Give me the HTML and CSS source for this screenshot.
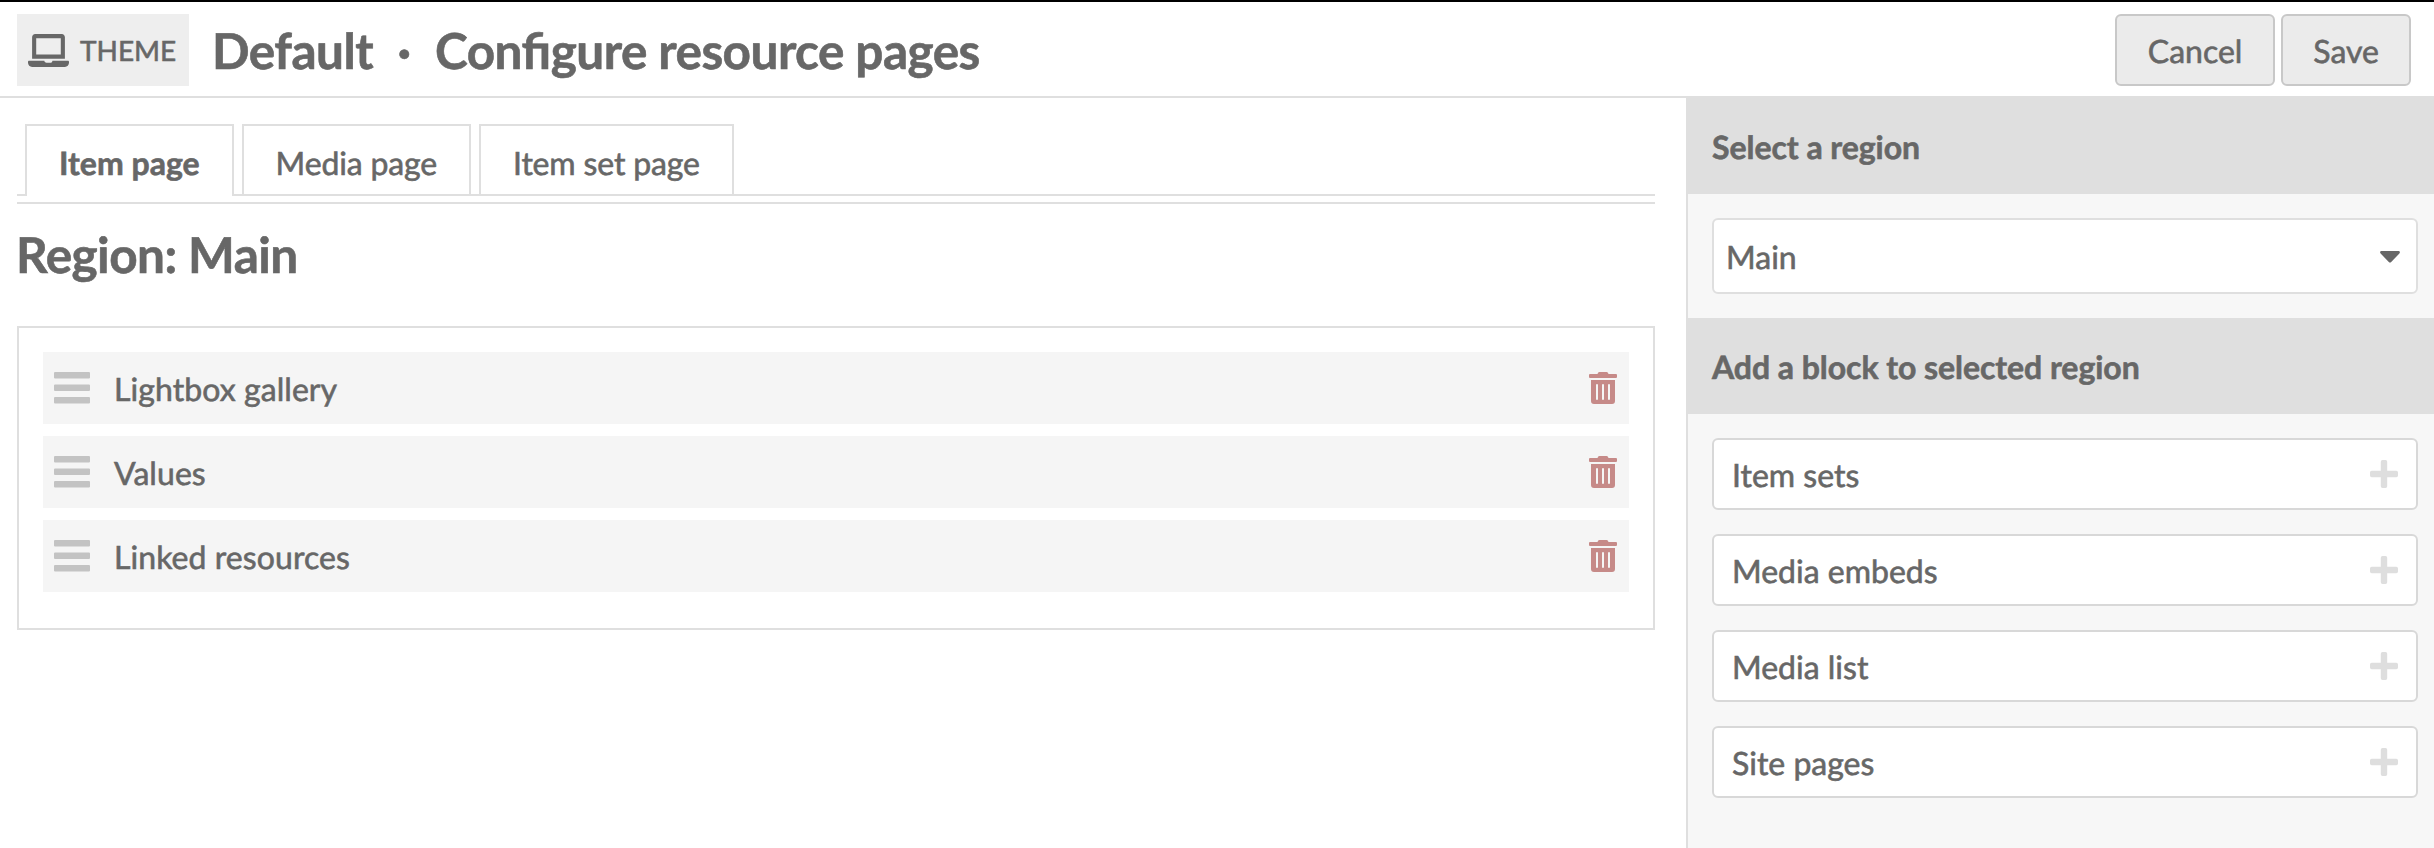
FILE: index.html
```html
<!DOCTYPE html>
<html lang="en">
<head>
<meta charset="utf-8">
<title>Configure resource pages</title>
<link rel="stylesheet" href="styles.css">
</head>
<body>
<svg class="sprite" aria-hidden="true">
  <symbol id="bars" viewBox="0 0 36 32"><path d="M1 0h34a1 1 0 0 1 1 1v4.500a1 1 0 0 1-1 1H1a1 1 0 0 1-1-1V1a1 1 0 0 1 1-1zM1 12.500h34a1 1 0 0 1 1 1V18a1 1 0 0 1-1 1H1a1 1 0 0 1-1-1v-4.500a1 1 0 0 1 1-1zM1 25h34a1 1 0 0 1 1 1v4.500a1 1 0 0 1-1 1H1a1 1 0 0 1-1-1V26a1 1 0 0 1 1-1z"/></symbol>
  <symbol id="trash" viewBox="0 0 448 512"><path d="M32 464a48 48 0 0 0 48 48h288a48 48 0 0 0 48-48V128H32zm272-256a16 16 0 0 1 32 0v224a16 16 0 0 1-32 0zm-96 0a16 16 0 0 1 32 0v224a16 16 0 0 1-32 0zm-96 0a16 16 0 0 1 32 0v224a16 16 0 0 1-32 0zM432 32H312l-9.400-18.700A24 24 0 0 0 281.100 0H166.800a23.720 23.720 0 0 0-21.400 13.300L136 32H16A16 16 0 0 0 0 48v32a16 16 0 0 0 16 16h416a16 16 0 0 0 16-16V48a16 16 0 0 0-16-16z"/></symbol>
  <symbol id="plus" viewBox="0 0 28 28"><path d="M12.500 0h3a1.700 1.700 0 0 1 1.700 1.700v9.100h9.100a1.700 1.700 0 0 1 1.700 1.700v3a1.700 1.700 0 0 1-1.700 1.700h-9.100v9.100a1.700 1.700 0 0 1-1.700 1.700h-3a1.700 1.700 0 0 1-1.700-1.700v-9.100H1.700A1.700 1.700 0 0 1 0 15.500v-3a1.700 1.700 0 0 1 1.700-1.700h9.100V1.700A1.700 1.700 0 0 1 12.500 0z"/></symbol>
</svg>
<header class="topbar">
  <span class="section">
    <svg class="laptop" viewBox="0 0 640 512"><path d="M624 416H381.540c-.740 19.810-14.710 32-32.740 32H288c-18.690 0-33.020-17.470-32.770-32H16c-8.800 0-16 7.200-16 16v16c0 35.200 28.800 64 64 64h512c35.200 0 64-28.800 64-64v-16c0-8.800-7.200-16-16-16zM576 48c0-26.400-21.600-48-48-48H112C85.600 0 64 21.600 64 48v336h512V48zm-64 272H128V64h384v256z"/></svg>
    <span>THEME</span>
  </span>
  <h1 class="title"><span>Default</span><span class="dot">·</span><span>Configure resource pages</span></h1>
  <div class="actions"><button class="button">Cancel</button><button class="button save">Save</button></div>
</header>
<div class="layout">
  <main class="content">
    <nav class="tabs">
      <a class="tab active">Item page</a>
      <a class="tab">Media page</a>
      <a class="tab">Item set page</a>
    </nav>
    <h2 class="region-title">Region: Main</h2>
    <ul class="blocks">
      <li class="block"><svg class="handle"><use href="#bars"/></svg><span class="name">Lightbox gallery</span><svg class="remove"><use href="#trash"/></svg></li>
      <li class="block"><svg class="handle"><use href="#bars"/></svg><span class="name">Values</span><svg class="remove"><use href="#trash"/></svg></li>
      <li class="block"><svg class="handle"><use href="#bars"/></svg><span class="name">Linked resources</span><svg class="remove"><use href="#trash"/></svg></li>
    </ul>
  </main>
  <aside class="sidebar">
    <h3 class="side-heading first">Select a region</h3>
    <div class="select"><span>Main</span><svg class="caret" viewBox="0 0 20 12"><path d="M1.500 0h17c1.400 0 1.900 1.500.900 2.500l-8.200 8.500c-.700.700-1.700.700-2.400 0L.600 2.500C-.400 1.500.100 0 1.500 0z"/></svg></div>
    <h3 class="side-heading">Add a block to selected region</h3>
    <div class="options">
      <button class="option"><span>Item sets</span><svg class="plus"><use href="#plus"/></svg></button>
      <button class="option"><span>Media embeds</span><svg class="plus"><use href="#plus"/></svg></button>
      <button class="option"><span>Media list</span><svg class="plus"><use href="#plus"/></svg></button>
      <button class="option"><span>Site pages</span><svg class="plus"><use href="#plus"/></svg></button>
    </div>
  </aside>
</div>
</body>
</html>
```

FILE: styles.css
```css
* { box-sizing: border-box; }
body {
  margin: 0;
  height: 848px;
  display: flex;
  flex-direction: column;
  overflow: hidden;
  background: #fff;
  color: #676767;
  font: 32px/48px Lato, sans-serif;
  text-rendering: geometricPrecision;
  -webkit-text-stroke: 0.6px currentColor;
}
h1, h2, h3, ul { margin: 0; padding: 0; }
svg { display: block; flex: none; fill: currentColor; }
.sprite { display: none; }
button { font: inherit; color: inherit; margin: 0; text-rendering: inherit; }

.topbar {
  flex: none;
  height: 98px;
  display: flex;
  align-items: flex-start;
  padding: 12px 23px 0 17px;
  border-top: 2px solid #000;
  border-bottom: 2px solid #dfdfdf;
}
.section {
  width: 172px;
  height: 72px;
  display: flex;
  align-items: center;
  gap: 11px;
  padding-left: 11px;
  background: #eee;
  font-size: 28px;
}
.laptop { width: 41px; height: 33px; }
.title, .region-title {
  font-size: 49.5px;
  line-height: 72px;
  letter-spacing: -0.54px;
  font-feature-settings: "liga" 1;
}
.title { display: flex; margin-left: 23px; }
.dot { width: 62px; text-align: center; }
.actions { display: flex; gap: 6px; margin-left: auto; }
.button {
  height: 72px;
  padding: 2px 31px 0;
  border: 2px solid #c8c8c8;
  border-radius: 6px;
  background: #ebebeb;
}
.button.save { padding: 2px 30px 0; }

.layout { flex: 1; display: flex; }
.content { flex: 1; padding: 26px 31px 0 17px; }
.tabs {
  display: flex;
  gap: 8px;
  height: 80px;
  padding-left: 8px;
  border-bottom: 2px solid #dfdfdf;
  background: linear-gradient(#dfdfdf, #dfdfdf) 0 70px / 100% 2px no-repeat;
}
.tab {
  height: 70px;
  padding: 13px 32px 0;
  border: 2px solid #dfdfdf;
  border-bottom: 0;
  letter-spacing: -0.15px;
}
.tab.active { height: 72px; background: #fff; font-weight: 700; letter-spacing: 0; }
.region-title { margin-top: 14px; margin-left: -1px; }
.blocks {
  height: 304px;
  margin-top: 36px;
  padding: 24px;
  display: flex;
  flex-direction: column;
  gap: 12px;
  border: 2px solid #dfdfdf;
  list-style: none;
}
.block {
  height: 72px;
  display: flex;
  align-items: center;
  padding: 0 12px 0 11px;
  background: #f5f5f5;
}
.handle { width: 36px; height: 32px; margin-top: -1px; color: #c3c3c3; }
.name { flex: 1; margin-left: 24px; padding-top: 1px; letter-spacing: 0.07px; }
.remove { width: 28px; height: 32px; color: #c68a88; }

.sidebar {
  width: 748px;
  margin-top: -2px;
  border-left: 2px solid #dfdfdf;
  background: #f7f7f7;
}
.side-heading {
  height: 96px;
  padding: 25px 24px 0;
  background: #dfdfdf;
  font-size: 32px;
  line-height: 48px;
  letter-spacing: -0.05px;
}
.side-heading.first { height: 98px; padding-top: 27px; }
.select {
  height: 76px;
  margin: 24px 16px 24px 24px;
  padding: 2px 16px 0 12px;
  display: flex;
  align-items: center;
  justify-content: space-between;
  border: 2px solid #dfdfdf;
  border-radius: 6px;
  background: #fff;
}
.caret { width: 20px; height: 12px; }
.options {
  display: flex;
  flex-direction: column;
  gap: 24px;
  padding: 24px 16px 0 24px;
}
.option {
  height: 72px;
  padding: 0 18px;
  display: flex;
  align-items: center;
  justify-content: space-between;
  border: 2px solid #d8d8d8;
  border-radius: 6px;
  background: #fff;
}
.option span { padding-top: 2px; }
.plus { width: 28px; height: 28px; color: #dedede; }
```
